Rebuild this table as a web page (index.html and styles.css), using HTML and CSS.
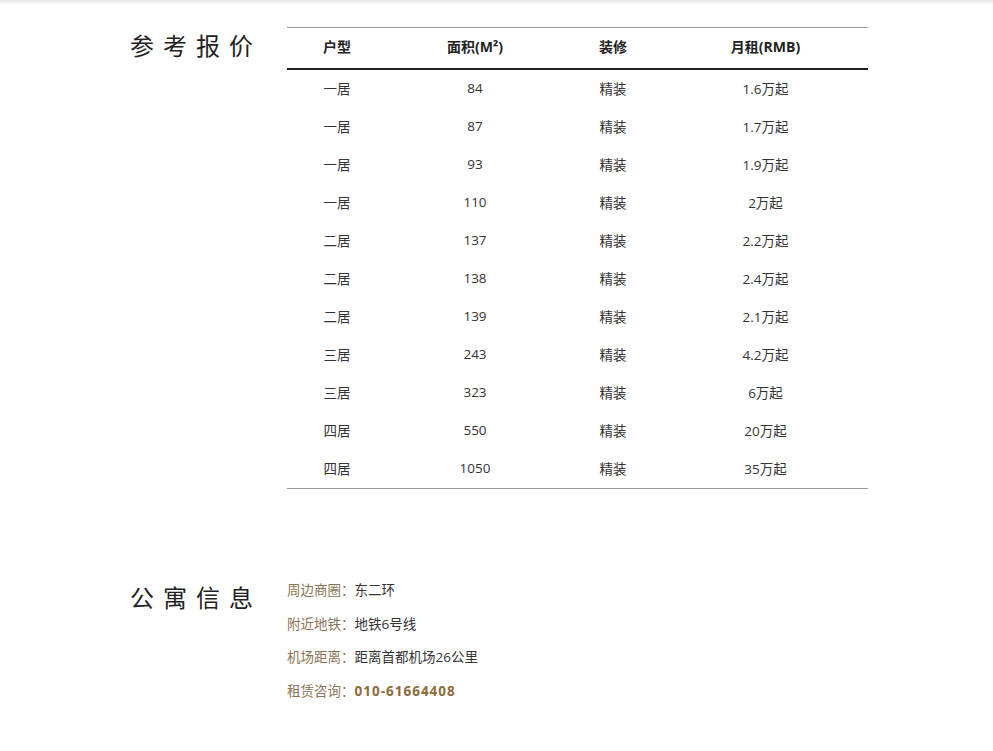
FILE: index.html
```html
<!DOCTYPE html>
<html lang="zh">
<head>
<meta charset="utf-8">
<link rel="stylesheet" href="styles.css">
</head>
<body>
<div class="topshade"></div>
<section class="block price">
  <h2 class="title">参考报价</h2>
  <table class="ptable">
    <thead>
      <tr><th class="c1">户型</th><th class="c2">面积(M²)</th><th class="c3">装修</th><th class="c4">月租(RMB)</th></tr>
    </thead>
    <tbody>
      <tr><td>一居</td><td>84</td><td>精装</td><td>1.6万起</td></tr>
      <tr><td>一居</td><td>87</td><td>精装</td><td>1.7万起</td></tr>
      <tr><td>一居</td><td>93</td><td>精装</td><td>1.9万起</td></tr>
      <tr><td>一居</td><td>110</td><td>精装</td><td>2万起</td></tr>
      <tr><td>二居</td><td>137</td><td>精装</td><td>2.2万起</td></tr>
      <tr><td>二居</td><td>138</td><td>精装</td><td>2.4万起</td></tr>
      <tr><td>二居</td><td>139</td><td>精装</td><td>2.1万起</td></tr>
      <tr><td>三居</td><td>243</td><td>精装</td><td>4.2万起</td></tr>
      <tr><td>三居</td><td>323</td><td>精装</td><td>6万起</td></tr>
      <tr><td>四居</td><td>550</td><td>精装</td><td>20万起</td></tr>
      <tr><td>四居</td><td>1050</td><td>精装</td><td>35万起</td></tr>
    </tbody>
  </table>
</section>
<section class="block info">
  <h2 class="title">公寓信息</h2>
  <ul class="ilist">
    <li><span class="lab">周边商圈：</span>东二环</li>
    <li><span class="lab">附近地铁：</span>地铁6号线</li>
    <li><span class="lab">机场距离：</span>距离首都机场26公里</li>
    <li><span class="lab">租赁咨询：</span><b class="tel">010-61664408</b></li>
  </ul>
</section>
</body>
</html>
```
FILE: styles.css
```css
html, body {
  margin: 0;
  padding: 0;
  background: #fff;
}
body {
  font-family: "Open Sans", "Noto Sans CJK SC", sans-serif;
  font-size: 13.5px;
  color: #333;
}
.topshade {
  height: 5px;
  background: linear-gradient(to bottom, #e6e6e6, #ffffff);
}
.block {
  display: flex;
  padding-left: 130px;
}
.title {
  width: 157px;
  margin: 0;
  font-family: "Noto Sans CJK SC", sans-serif;
  font-weight: 400;
  font-size: 24px;
  letter-spacing: 9px;
  color: #222;
  line-height: 32px;
}
.price {
  padding-top: 22px;
}
.price .title {
  margin-top: 2px;
}
.ptable {
  width: 581px;
  border-collapse: collapse;
  border-top: 1px solid #999;
  border-bottom: 1px solid #999;
  table-layout: fixed;
}
.ptable th {
  height: 36px;
  font-weight: bold;
  font-size: 14px;
  color: #222;
  text-align: center;
  padding: 0 0 4px;
  border-bottom: 2px solid #222;
}
.c1 { width: 100px; }
.c2 { width: 176px; }
.c3 { width: 100px; }
.c4 { width: 205px; }
.ptable td {
  height: 35px;
  padding: 0 0 3px;
  text-align: center;
  color: #333;
}
.info {
  margin-top: 88px;
}
.info .title {
  margin-top: 4px;
}
.ilist {
  list-style: none;
  margin: 0;
  padding: 2px 0 0;
}
.ilist li {
  height: 33.6px;
  line-height: 22px;
  color: #333;
}
.lab {
  color: #8a7355;
}
.tel {
  color: #8c6a3a;
  font-weight: bold;
  letter-spacing: 1px;
}
```
